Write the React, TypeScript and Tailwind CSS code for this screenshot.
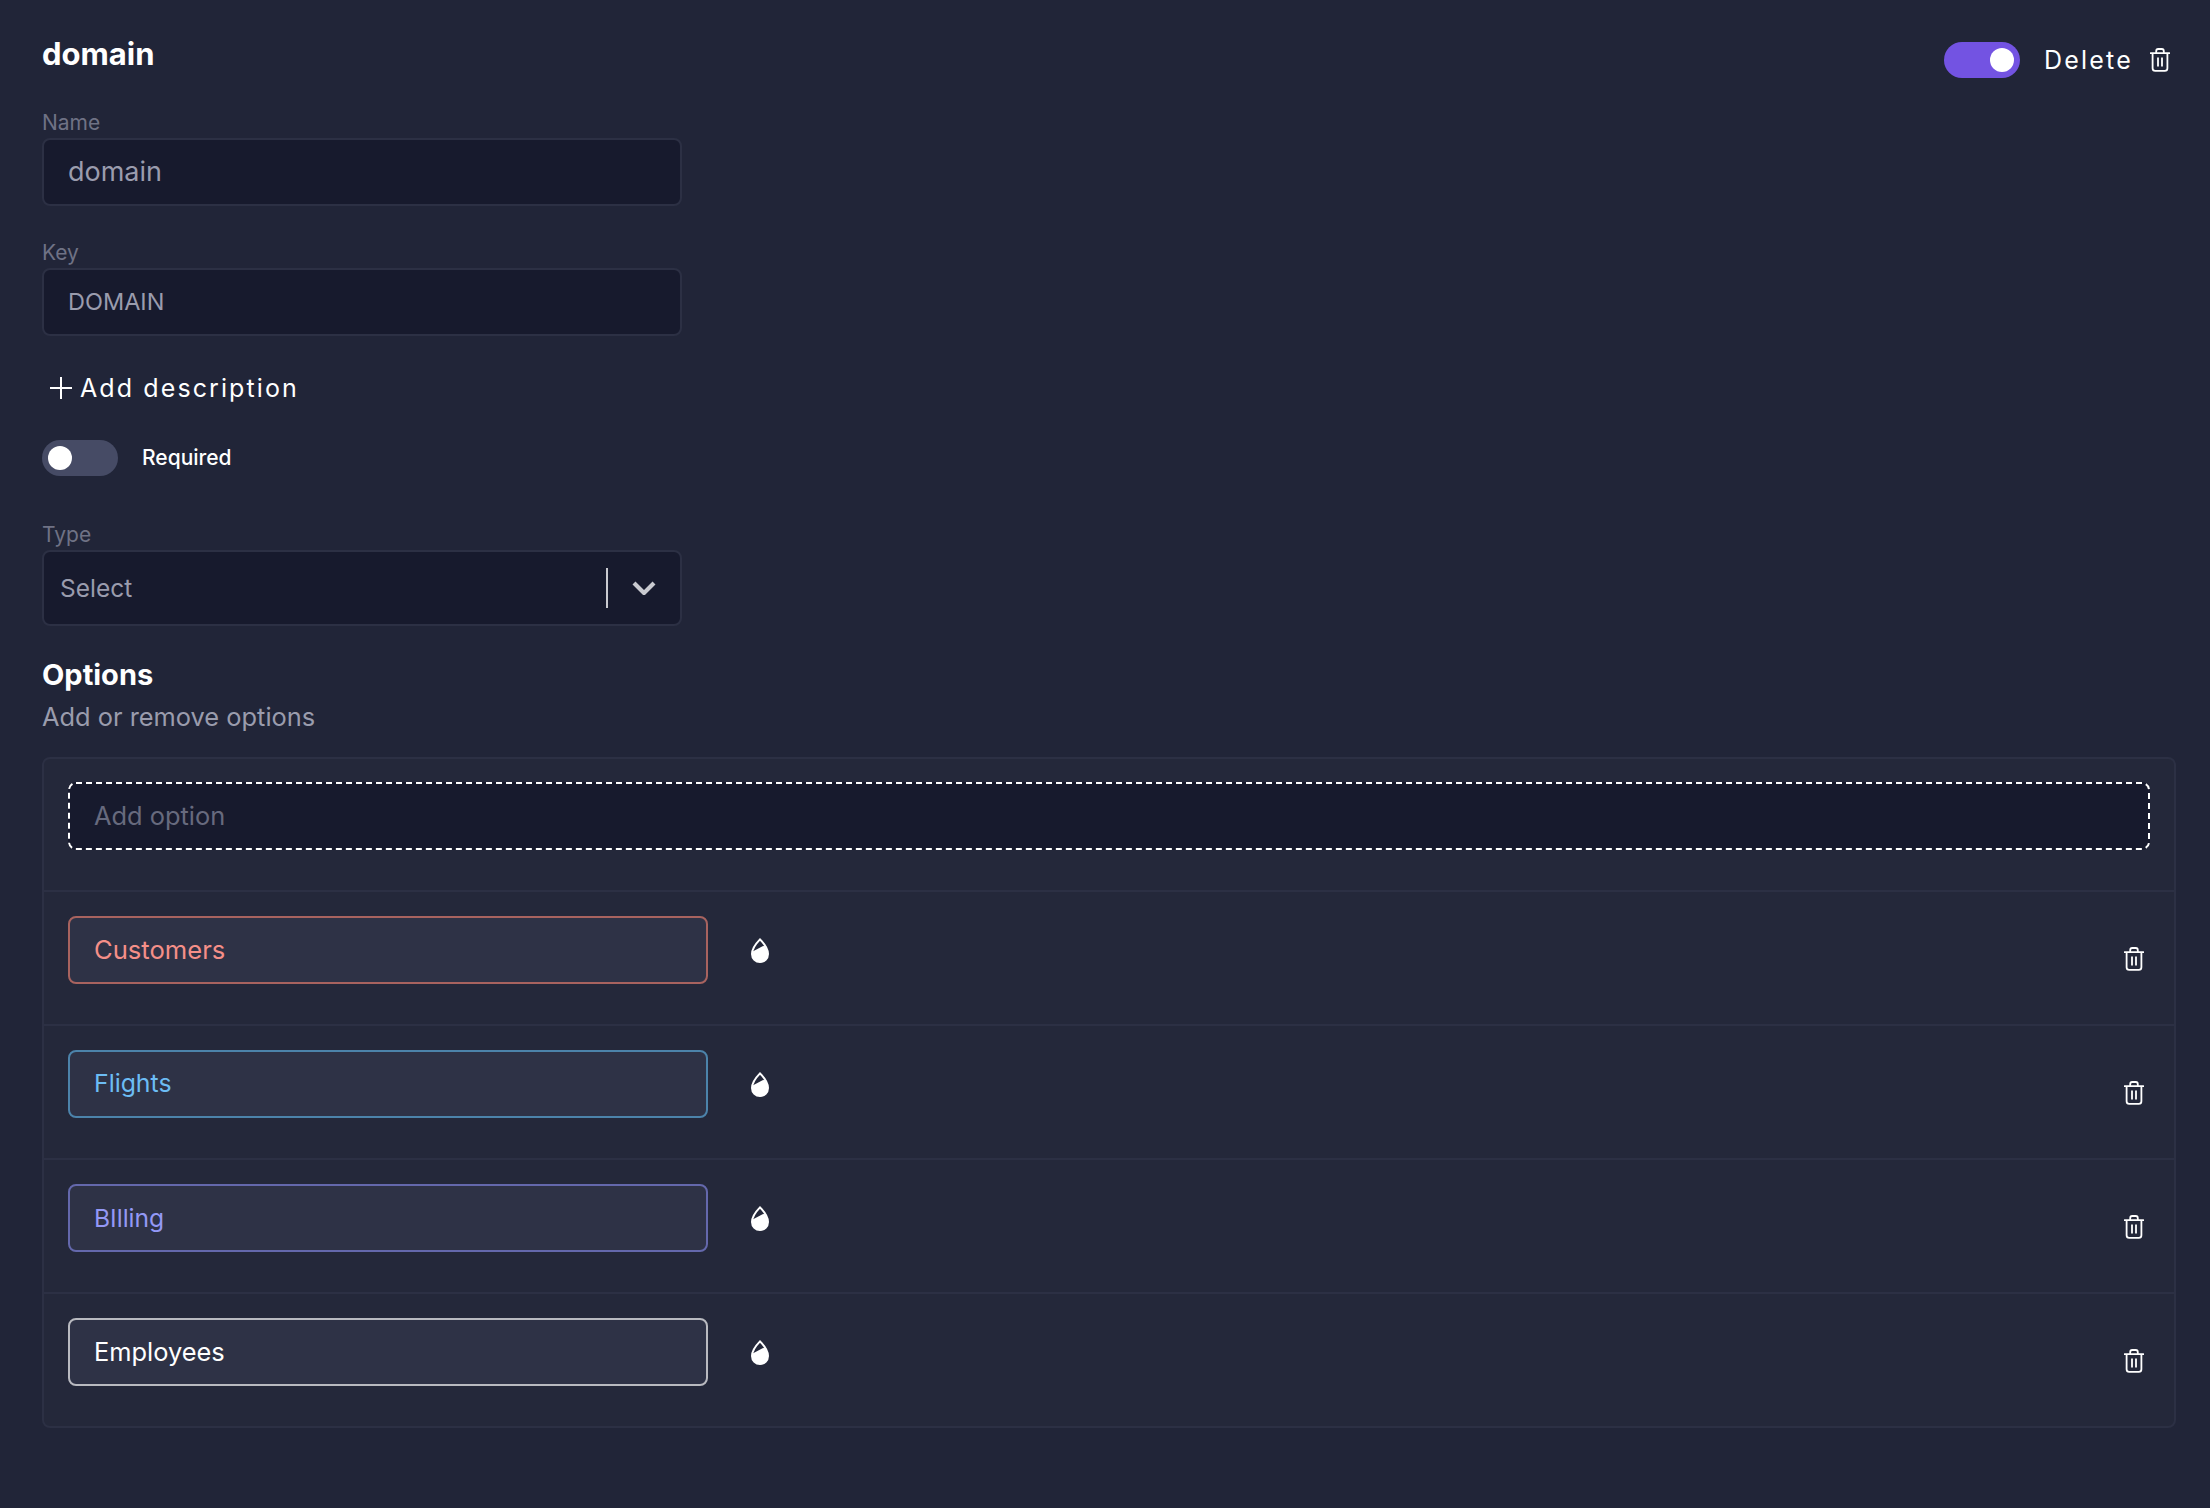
import React from "react";

function Trash({ className }: { className?: string }) {
  return (
    <svg viewBox="0 0 20 24" fill="none" stroke="currentColor" strokeWidth="1.8" className={className}>
      <path d="M0.5 5.2H19.5" strokeLinecap="round" />
      <path d="M6.2 5V3.2C6.2 2 7 1 8.2 1H11.8C13 1 13.8 2 13.8 3.2V5" />
      <path d="M2.6 5.2V20.2C2.6 21.8 3.6 22.8 5.2 22.8H14.8C16.4 22.8 17.4 21.8 17.4 20.2V5.2" />
      <path d="M8 9.5V18.5M12 9.5V18.5" />
    </svg>
  );
}

function Drop() {
  return (
    <svg viewBox="0 0 18 25" className="w-[18px] h-[25px] text-white" fill="none">
      <path d="M9 1.4C9 1.4 1 9.6 1 16C1 20.6 4.6 24 9 24C13.4 24 17 20.6 17 16C17 9.6 9 1.4 9 1.4Z" stroke="currentColor" strokeWidth="2" />
      <path d="M1 16C1 20.6 4.6 24 9 24C13.4 24 17 20.6 17 16C17 13.4 15.4 10 13.4 7.4L1.6 13.6C1.2 14.4 1 15.2 1 16Z" fill="currentColor" />
    </svg>
  );
}

function Toggle({ on }: { on?: boolean }) {
  return (
    <div className={on ? "w-[76px] h-9 rounded-full bg-[#7353e2] flex items-center justify-end pr-1.5" : "w-[76px] h-9 rounded-full bg-[#464b65] flex items-center pl-1.5"}>
      <div className="w-6 h-6 rounded-full bg-white" />
    </div>
  );
}

function Label({ children, className }: { children: React.ReactNode; className?: string }) {
  return <div className={"text-[21px] leading-6 text-[#6f7285] " + (className ?? "")}>{children}</div>;
}

function Field({ value, size }: { value: string; size: string }) {
  return (
    <div className={"mt-[3px] w-[640px] h-[68px] rounded-lg border-2 border-[#2c3044] bg-[#171a2d] pl-6 flex items-center text-[#9a9cad] " + size}>
      {value}
    </div>
  );
}

const rows = [
  { name: "Customers", border: "border-[#a8635f]", text: "text-[#f58f88] text-[25.6px]" },
  { name: "Flights", border: "border-[#4c83aa]", text: "text-[#6cbcf4] text-[24.8px]" },
  { name: "BIlling", border: "border-[#6468ac]", text: "text-[#9398f5] text-[24.6px]" },
  { name: "Employees", border: "border-[#b9bac0]", text: "text-white text-[25.4px]" },
];

export default function App() {
  return (
    <div className="w-[2210px] h-[1508px] bg-[#212538] pl-[42px] pr-[34px] overflow-hidden font-['Inter','Noto_Sans',sans-serif]">
      <div className="flex justify-between items-start">
        <h1 className="mt-9 text-[31px] leading-9 font-bold text-white">domain</h1>
        <div className="mt-[42px] flex items-center">
          <Toggle on />
          <span className="ml-6 text-[25px] leading-9 text-white tracking-[2.2px]">Delete</span>
          <Trash className="ml-[17px] mr-1.5 w-5 h-6 text-white" />
        </div>
      </div>

      <Label className="mt-[33px]">Name</Label>
      <Field value="domain" size="text-[27px]" />
      <Label className="mt-[35px]">Key</Label>
      <Field value="DOMAIN" size="text-[23.5px]" />

      <div className="mt-[37px] h-[30px] flex items-center text-white ml-2">
        <svg viewBox="0 0 22 22" className="w-[22px] h-[22px]" stroke="currentColor" strokeWidth="2">
          <path d="M11 0V22M0 11H22" />
        </svg>
        <span className="ml-2 text-[25px] leading-[30px] tracking-[2.1px]">Add description</span>
      </div>

      <div className="mt-[37px] flex items-center">
        <Toggle />
        <span className="ml-6 text-[21px] font-medium text-white">Required</span>
      </div>

      <Label className="mt-[47px]">Type</Label>
      <div className="mt-[3px] w-[640px] h-[76px] rounded-lg border-2 border-[#2c3044] bg-[#171a2d] pl-4 pr-6 flex items-center text-[24.5px] text-[#9a9cad]">
        <span className="grow">Select</span>
        <div className="w-0.5 h-10 bg-[#c9cad0]" />
        <svg viewBox="0 0 24 14" fill="none" stroke="#c9cad0" strokeWidth="4.2" className="ml-6 w-6 h-3.5">
          <path d="M2 2L12 12L22 2" />
        </svg>
      </div>

      <h2 className="mt-[29px] text-[29px] leading-10 font-bold text-white">Options</h2>
      <p className="mt-1.5 text-[25.4px] leading-8 text-[#9a9cad]">Add or remove options</p>

      <div className="mt-6 rounded-lg border-2 border-[#2c3044] bg-[#24283a]">
        <div className="px-6 pt-[23px] pb-10">
          <div className="relative h-[68px] rounded-lg bg-[#171a2d] pl-[26px] flex items-center text-[25.4px] text-[#676a7e]">
            Add option
            <svg width="2082" height="68" fill="none" className="absolute left-0 top-0">
              <rect x="1" y="1" width="2080" height="66" rx="7" stroke="#ffffff" strokeWidth="2" strokeDasharray="6 4" />
            </svg>
          </div>
        </div>
        {rows.map((r) => (
          <div key={r.name} className="border-t-2 border-[#2c3044] h-[134px] pt-6 pl-6 pr-[30px]">
            <div className="flex items-center h-[68px]">
              <div className={"w-[640px] h-[68px] rounded-lg border-2 bg-[#2e3246] pl-6 flex items-center " + r.border + " " + r.text}>
                {r.name}
              </div>
              <div className="ml-[43px]">
                <Drop />
              </div>
              <Trash className="ml-auto mt-[18px] w-5 h-6 text-white" />
            </div>
          </div>
        ))}
      </div>
    </div>
  );
}
